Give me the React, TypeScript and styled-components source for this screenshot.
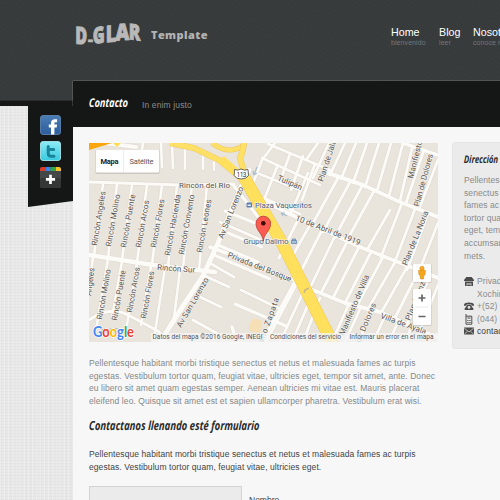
import React from "react";
import styled, { createGlobalStyle } from "styled-components";

const GlobalStyle = createGlobalStyle`
  * { box-sizing: border-box; }
  html, body { margin: 0; padding: 0; height: 500px; overflow: hidden; }
  body { font-family: "Liberation Sans", Arial, sans-serif; }
  p, h1, h2, h3 { margin: 0; font-weight: normal; }
`;

const Page = styled.div`
  width: 500px;
  height: 500px;
  overflow: hidden;
  display: flex;
  flex-direction: column;
  background-color: #e9e9e9;
  background-image:
    repeating-linear-gradient(0deg, rgba(0, 0, 0, 0.02) 0 1px, transparent 1px 3px),
    repeating-linear-gradient(90deg, rgba(255, 255, 255, 0.25) 0 1px, transparent 1px 4px),
    repeating-linear-gradient(90deg, rgba(0, 0, 0, 0.012) 0 2px, transparent 2px 5px);
`;

const darkTexture = `
  background-color: #383b3b;
  background-image:
    repeating-linear-gradient(35deg, rgba(255, 255, 255, 0.01) 0 1px, transparent 1px 4px),
    repeating-linear-gradient(-55deg, rgba(0, 0, 0, 0.025) 0 1px, transparent 1px 3px);
`;

const Header = styled.header`
  ${darkTexture}
  height: 81px;
  flex: none;
  display: flex;
  align-items: flex-start;
  padding-left: 75px;
`;

const Brand = styled.div`
  display: flex;
  flex: none;
  width: 316px;
  padding-top: 20px;
`;

const BrandTag = styled.span`
  margin: 7px 0 0 6px;
  font: 800 11px/15px "Open Sans", sans-serif;
  letter-spacing: 0.4px;
  color: #b2b3b3;
`;

const Nav = styled.nav`
  display: flex;
  flex: none;
  width: 109px;
  padding-top: 26px;
`;

const NavItem = styled.div<{ $width: number }>`
  flex: none;
  width: ${(p) => p.$width}px;
  white-space: nowrap;
`;

const NavLabel = styled.div`
  font-size: 10.7px;
  line-height: 13px;
  color: #fff;
`;

const NavHint = styled.div`
  font-size: 7px;
  line-height: 8px;
  letter-spacing: 0.08px;
  color: #747777;
`;

const Body = styled.div`
  flex: 1;
  display: flex;
  min-height: 0;
`;

const Rail = styled.div`
  width: 73px;
  flex: none;
  display: flex;
  flex-direction: column;
`;

const RailTop = styled.div`
  ${darkTexture}
  height: 20px;
  border-bottom: 1px solid #2a2c2c;
`;

const RailEdge = styled.div`
  height: 5px;
  background: #151716;
`;

const Ribbon = styled.div`
  align-self: flex-end;
  width: 45px;
  height: 101px;
  background: #151716;
  clip-path: polygon(0 0, 100% 0, 100% 94%, 0 100%);
  display: flex;
  flex-direction: column;
  align-items: center;
  gap: 6px;
  padding-top: 9px;

  svg { display: block; flex: none; }
`;

const Main = styled.main`
  flex: 1;
  min-width: 0;
  background: #f7f7f7;
  box-shadow: 0 0 1px #d2d2d2;
`;

const TitleBar = styled.div`
  height: 46px;
  background: #151716;
  display: flex;
  align-items: center;
  padding-left: 16px;
`;

const Script = styled.span<{ $size: number; $squeeze: number; $color: string }>`
  display: block;
  width: max-content;
  font: italic 700 ${(p) => p.$size}px/14px "Open Sans", sans-serif;
  transform: scaleX(${(p) => p.$squeeze}) skewX(-3deg);
  transform-origin: left center;
  color: ${(p) => p.$color};
  white-space: nowrap;
`;

const TitleSlot = styled.h1`
  width: 53px;
  margin-top: -3px;
`;

const Subtitle = styled.span`
  font-size: 8.5px;
  letter-spacing: 0.13px;
  color: #8b8b8b;
  padding-top: 2px;
`;

const Content = styled.div`
  display: flex;
  gap: 14px;
  padding: 16px 0 0 16px;
`;

const Article = styled.div`
  width: 349px;
  flex: none;
`;

const MapBox = styled.div`
  width: 349px;
  height: 199px;

  svg { display: block; }
`;

const Copy = styled.p<{ $color: string }>`
  font-size: 8.5px;
  line-height: 12.6px;
  letter-spacing: 0.08px;
  color: ${(p) => p.$color};
  white-space: nowrap;
`;

const Intro = styled.div`
  padding-top: 15px;
`;

const FormTitle = styled.h2`
  height: 14px;
  margin: 12px 0 15px;
`;

const FieldRow = styled.div`
  display: flex;
  margin-top: 12px;
  gap: 7px;
`;

const Field = styled.div`
  width: 153px;
  height: 24px;
  background: #ebebeb;
  border: 1px solid #d3d3d3;
`;

const FieldLabel = styled.span`
  font-size: 8.5px;
  line-height: 12px;
  padding-top: 8px;
  color: #444;
`;

const Aside = styled.aside`
  width: 120px;
  flex: none;
  height: 207px;
  margin-top: -1px;
  padding: 9px 0 0 11px;
  background: #ebebeb;
  border: 1px solid #e5e5e5;
  border-radius: 3px;
`;

const AsideTitle = styled.h3`
  height: 13px;
  margin-bottom: 9px;
`;

const ContactList = styled.div`
  margin-top: 13px;
`;

const ContactRow = styled.div<{ $dark?: boolean }>`
  display: flex;
  height: 12.5px;
  font-size: 8.5px;
  line-height: 12.5px;
  letter-spacing: 0.08px;
  white-space: nowrap;
  color: ${(p) => (p.$dark ? "#3c3c3c" : "#8a8a8a")};
`;

const IconSlot = styled.span`
  width: 13px;
  flex: none;

  svg { display: block; margin-top: 1px; }
`;

const Logo = () => (
  <svg width="70" height="28" viewBox="75 20 70 28" fill="#b9b9b9" stroke="#b9b9b9" strokeWidth="0.9" fontFamily="Open Sans" fontWeight="800">
    <text fontSize="22" transform="translate(75.300 43.700) skewY(3) scale(.74 1.080)">D</text>
    <text fontSize="18" transform="translate(88 44.500) scale(.85 .8)">-</text>
    <text fontSize="22" transform="translate(92.800 43.800) skewY(-6) scale(.74 1.030)">G</text>
    <text fontSize="22" transform="translate(105.700 42.600) skewY(-6) scale(.82 1.050)">L</text>
    <text fontSize="22" transform="translate(115.600 40.600) skewY(-3) scale(.86 1.030)">A</text>
    <text fontSize="22" transform="translate(128.800 39.200) skewY(7) scale(.78 1)">R</text>
  </svg>
);

const FacebookIcon = () => (
  <svg width="21" height="20" viewBox="0 0 21 20">
    <defs>
      <linearGradient id="fb" x2="0" y2="1"><stop stopColor="#4b7db5" /><stop offset="1" stopColor="#2d5c9b" /></linearGradient>
    </defs>
    <rect x=".5" y=".5" width="20" height="19" rx="2.5" fill="url(#fb)" stroke="#6b97c6" strokeWidth=".7" />
    <path d="M11 19.500v-7H8.800V9.600H11V8c0-2.600 1.500-3.800 3.800-3.800h2.300v3h-1.500c-1 0-1.200.5-1.200 1.200v1.200h2.700l-.4 2.900h-2.300v7z" fill="#fff" />
  </svg>
);

const TwitterIcon = () => (
  <svg width="21" height="20" viewBox="0 0 21 20">
    <defs>
      <linearGradient id="tw" x2="0" y2="1"><stop stopColor="#8cebf5" /><stop offset="1" stopColor="#38cbe0" /></linearGradient>
    </defs>
    <rect x=".5" y=".5" width="20" height="19" rx="2.500" fill="url(#tw)" stroke="#b3f2f8" strokeWidth=".8" />
    <path d="M8.200 5.500v6.700c0 2 1.200 3 3.200 3h2.600M8.200 8.600h5.500" fill="none" stroke="#1a8299" strokeWidth="3" strokeLinecap="round" />
  </svg>
);

const PlusIcon = () => (
  <svg width="21" height="21" viewBox="0 0 21 21">
    <rect x="0" y="1" width="21" height="20" rx="2.500" fill="#444747" />
    <rect x="0" y="11" width="21" height="10" rx="2.500" fill="#353737" />
    <path d="M0 4V2Q0 0 2 0H5.500V4Z" fill="#dc3d2a" />
    <path d="M5.500 0H10.500V4H5.500Z" fill="#3f83ef" />
    <path d="M10.500 0H16V4H10.500Z" fill="#2fa84a" />
    <path d="M16 0H19Q21 0 21 2V4H16Z" fill="#f6c22d" />
    <path d="M10.500 7.800V17M5.900 12.400H15.100" stroke="#fff" strokeWidth="2.700" />
  </svg>
);

const HomeIcon = () => (
  <svg width="10" height="10" viewBox="0 0 10 10" fill="#4c4c4c">
    <path d="M2.300 1h5.400L10 4v1H0V4z" />
    <path d="M1 5.500h8V10H7.300V7H2.700v3H1zM3.200 7.600h3.600v.8H3.200zM3.200 9h3.600v1H3.200z" />
  </svg>
);

const PhoneIcon = () => (
  <svg width="10" height="10" viewBox="0 0 10 10" fill="#4c4c4c">
    <path d="M0 3.800C0 .8 10 .8 10 3.800v1H7.400V3.400H2.600v1.400H0z" />
    <path d="M3.300 4h3.400l2.600 3.500V9H.7V7.500z" />
    <circle cx="5" cy="6.400" r="1.300" fill="#ebebeb" />
  </svg>
);

const MobileIcon = () => (
  <svg width="10" height="11" viewBox="0 0 10 11" fill="none" stroke="#4c4c4c">
    <path d="M2 0v10.200h5.800V2.200H2M3.500 4h3" />
    <path d="M3.300 6.500h3.400M3.300 8.500h3.400" strokeDasharray="1 .4" />
  </svg>
);

const MailIcon = () => (
  <svg width="10" height="10" viewBox="0 0 10 10">
    <rect y="1.500" width="10" height="7" fill="#4c4c4c" />
    <path d="M.3 2.200L5 6l4.700-3.800M.5 8l3-2.700M9.500 8l-3-2.700" fill="none" stroke="#ebebeb" strokeWidth=".7" />
  </svg>
);

const WHITE_ROADS: [string, number][] = [
  // left side: Rincón streets
  ["M89 182L180 185L234 184", 3],
  ["M89 255L153 265L215 272", 4.5],
  ["M103 184L94 256M117 184L108 258M132 185L122 260M147 185L137 262M162 185L152 264M177 186L168 266M192 185L183 268M207 185L199 270", 2.600],
  ["M93 257L89 290M108 259L96 330M122 261L112 318M137 263L127 325M151 266L141 325M165 268L155 332M180 270L174 318", 2.600],
  ["M89 320Q110 305 130 316L158 331L166 342", 3],
  ["M161 143L162 167M172 143L173 168M185 147L185 169M203 155L203 169M214 160L214 170M143 143L142 150", 2.600],
  ["M104 143L136 147", 4],
  // Av San Lorenzo
  ["M249 170L238 194L218 243L203 276L183 306L160 342", 5],
  ["M234 186L262 222L275 240", 3.500],
  // below the avenue
  ["M225 211L255 223M220 222L268 243M228 233L262 247M218 245L258 262M214 255L270 279M208 262L234 277M203 275L229 287M198 296L221 307M241 290L280 309M235 304L286 326M193 320L220 335", 3],
  ["M210 247L240 258L297 281M296 280L262 342M232 327L237 342", 3.500],
  // north of the highway
  ["M275 143L262 160L252 186M262 158L320 185M257 173L300 190M268 144L330 170M277 167L264 200M290 154L280 181M303 156L291 190M315 164L302 200M264 198L300 214", 2.800],
  ["M318 143L306 160M329 143L313 178M308 173L290 215", 2.800],
  ["M328 173L363 185L400 202L438 217", 4],
  ["M403 143L438 155", 3.500],
  ["M345 143L330 175M356 143L341 179M367 143L353 183M379 143L365 187M391 143L377 191M403 143L389 196M412 148L400 201M438 160L419 209M424 150L406 203", 2.800],
  ["M338 178L312 225M350 182L323 232M362 186L335 237M374 191L346 242M390 210L367 250M402 203L381 257M415 209L394 264M428 214L407 270M438 223L418 274", 2.800],
  // 10 de Abril de 1919
  ["M264 201L298 218L360 247L398 262L438 278", 4],
  // Villa de Ayala
  ["M313 290L345 303L380 312L438 338", 4],
  ["M298 220L279 258M310 225L288 264M322 230L297 279M335 236L309 290M347 242L321 293M359 247L333 298M371 252L345 303M383 257L357 306M395 262L368 309M407 267L381 313M418 272L395 318M430 277L407 324M438 285L420 331", 2.800],
  ["M306 286L280 342M297 283L266 342M313 293L292 342M320 298L303 342M348 306L332 342M360 309L345 342M372 312L358 342M385 316L373 342M398 322L389 342M411 328L405 342", 2.800],
];

const YELLOW_ROADS: [string, number][] = [
  ["M170 143L194 148L219 160L241 178", 5],
  ["M212 143Q229 156 244 145", 4],
  ["M244 143Q243 152 240 158L244 172", 5],
];

interface StreetLabel { text: string; x: number; y: number; rotate: number; length: number; }

const STREETS: StreetLabel[] = [
  { text: "Rincón del Rio", x: 179, y: 187.500, rotate: 0, length: 51 },
  { text: "Rincón Sur", x: 157, y: 270, rotate: 4, length: 38 },
  { text: "Rincón Angeles", x: 97, y: 246, rotate: -81, length: 55 },
  { text: "Rincón Molino", x: 111, y: 247, rotate: -80, length: 53 },
  { text: "Rincón Puente", x: 126, y: 248, rotate: -80, length: 54 },
  { text: "Rincón Arcos", x: 141, y: 248, rotate: -80, length: 48 },
  { text: "Rincón Flores", x: 156, y: 248, rotate: -80, length: 49 },
  { text: "Rincón Hacienda", x: 170, y: 256, rotate: -80, length: 62 },
  { text: "Rincón Convento", x: 184, y: 255, rotate: -80, length: 61 },
  { text: "Rincón Leones", x: 202, y: 253, rotate: -80, length: 54 },
  { text: "Angeles", x: 91, y: 296, rotate: -83, length: 28 },
  { text: "Rincón Molino", x: 102, y: 320, rotate: -80, length: 51 },
  { text: "Rincón Puente", x: 117, y: 321, rotate: -80, length: 51 },
  { text: "Rincón Arcos", x: 132, y: 313, rotate: -80, length: 46 },
  { text: "Rincón Flores", x: 146, y: 319, rotate: -80, length: 48 },
  { text: "Av San Lorenzo", x: 223, y: 239, rotate: -68, length: 55 },
  { text: "Av San Lorenzo", x: 181, y: 328, rotate: -60, length: 56 },
  { text: "Tulipán", x: 277, y: 180, rotate: 23, length: 26 },
  { text: "10 de Abril de 1919", x: 295, y: 220, rotate: 21.500, length: 69 },
  { text: "Privada del Bosque", x: 227, y: 257, rotate: 21.500, length: 68 },
  { text: "Plan de Jalapa", x: 323, y: 182, rotate: -72, length: 52 },
  { text: "Manifiesto de", x: 413, y: 179, rotate: -76, length: 50 },
  { text: "Plan de Dolores", x: 419, y: 207, rotate: -75, length: 54 },
  { text: "Plan de La Noria", x: 407, y: 266, rotate: -68, length: 58 },
  { text: "Manifiesto de Villa", x: 344, y: 336, rotate: -67, length: 65 },
  { text: "de Dolores", x: 360, y: 343, rotate: -67, length: 42 },
  { text: "Villa de Ayala", x: 380, y: 318, rotate: 20, length: 48 },
  { text: "Plan Monza", x: 410, y: 321, rotate: -68, length: 46 },
  { text: "iano Zapata", x: 262, y: 346, rotate: -70, length: 50 },
];

const MapDrawing = () => (
  <svg width="349" height="199" viewBox="89 143 349 199" fontFamily="Roboto, sans-serif">
    <rect x="89" y="143" width="349" height="199" fill="#e9e4dc" />
    <path d="M249 324l5-6 8 3-2 12-11-2z" fill="#f6dfb5" />
    {WHITE_ROADS.map(([d, w]) => (
      <path key={d} d={d} fill="none" stroke="#ddd6cc" strokeWidth={w + 0.800} strokeLinecap="round" />
    ))}
    {WHITE_ROADS.map(([d, w]) => (
      <path key={d} d={d} fill="none" stroke="#fcfbf8" strokeWidth={w} strokeLinecap="round" strokeLinejoin="round" />
    ))}
    <path d="M89 143h23l-23 7z" fill="#fba60a" />
    <path d="M113 143h8l-4 4z" fill="#ffdc50" />
    {YELLOW_ROADS.map(([d, w]) => (
      <g key={d} fill="none">
        <path d={d} stroke="#efc95a" strokeWidth={w + 1} />
        <path d={d} stroke="#ffe066" strokeWidth={w} />
      </g>
    ))}
    <path d="M221 159L243 178" fill="none" stroke="#ffe05d" strokeWidth="8" />
    <path d="M241 172L282 243L334 346" fill="none" stroke="#efc95a" strokeWidth="12.500" />
    <path d="M241 172L282 243L334 346" fill="none" stroke="#ffe05d" strokeWidth="11.500" />
    <path d="M304 293l1-3 4-2" fill="none" stroke="#c6b887" strokeWidth="1.500" />
    <path d="M257 167l-3 8m0 0l-1-4m1 4l3-2M287 216l-6-3m0 0l2 3m-2-3h4" fill="none" stroke="#a9bfd0" strokeWidth="1.200" />

    <g fontSize="8" fill="#5a5754" stroke="#f5f2ed" strokeWidth="1.200" paintOrder="stroke">
      {STREETS.map((s) => (
        <text key={s.text + s.x} transform={`translate(${s.x} ${s.y}) rotate(${s.rotate})`} textLength={s.length}>
          {s.text}
        </text>
      ))}
    </g>

    <path d="M234.500 169.500q3.500 1.500 6.500-.5q3.500 2 7 .5l.5 6q-2 3.500-7.300 3.500t-7-3.500z" fill="#fff" stroke="#555" strokeWidth=".9" />
    <text x="236.500" y="176.500" fontSize="6.500" fill="#333" textLength="10">113</text>

    <rect x="246.500" y="202.500" width="5.500" height="5" rx="1" fill="#5a7fae" />
    <path d="M247.500 204.500h3.500v1.500h-3.500z" fill="#e2e9f0" />
    <g fontSize="8" fill="#4c6680" stroke="#f5f2ed" strokeWidth="1.200" paintOrder="stroke">
      <text x="255" y="208" textLength="57">Plaza Vaqueritos</text>
      <text x="243.500" y="244" textLength="45">Grupo Dalimo</text>
    </g>
    <path d="M291.500 240.500h5v3h-5zM292.500 240.500v-1.500h3v1.500" fill="#a9bfd6" stroke="#5a7fae" strokeWidth=".7" />

    <path d="M263.300 241c-.3-7-7.300-10.200-7.300-17.500a7.300 7.300 0 0 1 14.600 0c0 7.300-7 10.500-7.300 17.500z" fill="#fb5b50" stroke="#b9362f" strokeWidth=".8" />
    <circle cx="263.300" cy="223.300" r="2.300" fill="#3b0c0a" />

    <rect x="95.500" y="150" width="64" height="24" rx="1" fill="#000" opacity=".12" />
    <rect x="96" y="150" width="63" height="22.500" rx="1" fill="#fff" />
    <path d="M123.500 150v22.500" stroke="#e9e9e9" strokeWidth=".8" />
    <text x="100.500" y="163.700" fontSize="7.500" fontWeight="700" fill="#222" textLength="18">Mapa</text>
    <text x="129.500" y="163.700" fontSize="7.500" fill="#565656" textLength="24">Satélite</text>

    <text x="101" y="333" fontSize="8" fill="#777" opacity=".5">del Sur</text>
    <g fontFamily="Lato, sans-serif" fontWeight="700" fontSize="15.500" stroke="#fff" strokeWidth="1.400" paintOrder="stroke">
      <text x="93" y="337" textLength="41" lengthAdjust="spacingAndGlyphs">
        <tspan fill="#4285f4">G</tspan><tspan fill="#ea4335">o</tspan><tspan fill="#fbbc05">o</tspan><tspan fill="#4285f4">g</tspan><tspan fill="#34a853">l</tspan><tspan fill="#ea4335">e</tspan>
      </text>
    </g>

    <rect x="151" y="333" width="287" height="9" fill="#f5f5f5" opacity=".78" />
    <g fontSize="6.500" fill="#555">
      <text x="152.500" y="339.200" textLength="110">Datos del mapa ©2016 Google, INEGI</text>
      <text x="270" y="339.200" textLength="71">Condiciones del servicio</text>
      <text x="349.500" y="339.200" textLength="84">Informar un error en el mapa</text>
    </g>

    <g fill="#000" opacity=".14">
      <rect x="412.500" y="264" width="19" height="18.800" rx="1" />
      <rect x="412.500" y="289" width="19" height="36.800" rx="1" />
    </g>
    <rect x="413" y="264" width="18" height="18" rx="1" fill="#fff" />
    <rect x="413" y="289" width="18" height="36" rx="1" fill="#fff" />
    <path d="M416 307h12" stroke="#e6e6e6" strokeWidth=".8" />
    <path d="M422 294.500v7M418.500 298h7M418.500 316.500h7" stroke="#666" strokeWidth="1.700" />
    <g fill="#f5a81c" stroke="#d58112" strokeWidth=".5">
      <path d="M418.500 270.500q3.500-1.500 7 0l-.5 4.500h-1l-.5 4h-3l-.5-4h-1z" />
      <circle cx="422" cy="268.300" r="2.100" />
    </g>
  </svg>
);

export default function App() {
  return (
    <Page>
      <GlobalStyle />
      <Header>
        <Brand>
          <Logo />
          <BrandTag>Template</BrandTag>
        </Brand>
        <Nav>
          <NavItem $width={48}><NavLabel>Home</NavLabel><NavHint>bienvenido</NavHint></NavItem>
          <NavItem $width={34}><NavLabel>Blog</NavLabel><NavHint>leer</NavHint></NavItem>
          <NavItem $width={60}><NavLabel>Nosotros</NavLabel><NavHint>conoce mas</NavHint></NavItem>
        </Nav>
      </Header>
      <Body>
        <Rail>
          <RailTop />
          <RailEdge />
          <Ribbon>
            <FacebookIcon />
            <TwitterIcon />
            <PlusIcon />
          </Ribbon>
        </Rail>
        <Main>
          <TitleBar>
            <TitleSlot><Script $size={12} $squeeze={0.760} $color="#fff">Contacto</Script></TitleSlot>
            <Subtitle>In enim justo</Subtitle>
          </TitleBar>
          <Content>
            <Article>
              <MapBox><MapDrawing /></MapBox>
              <Intro>
                <Copy $color="#858989">
                  Pellentesque habitant morbi tristique senectus et netus et malesuada fames ac turpis<br />
                  egestas. Vestibulum tortor quam, feugiat vitae, ultricies eget, tempor sit amet, ante. Donec<br />
                  eu libero sit amet quam egestas semper. Aenean ultricies mi vitae est. Mauris placerat<br />
                  eleifend leo. Quisque sit amet est et sapien ullamcorper pharetra. Vestibulum erat wisi.
                </Copy>
              </Intro>
              <FormTitle><Script $size={12.500} $squeeze={0.760} $color="#2b2b2b">Contactanos llenando esté formulario</Script></FormTitle>
              <Copy $color="#444">
                Pellentesque habitant morbi tristique senectus et netus et malesuada fames ac turpis<br />
                egestas. Vestibulum tortor quam, feugiat vitae, ultricies eget.
              </Copy>
              <FieldRow>
                <Field />
                <FieldLabel>Nombre</FieldLabel>
              </FieldRow>
            </Article>
            <Aside>
              <AsideTitle><Script $size={10.500} $squeeze={0.740} $color="#2b2b2b">Dirección</Script></AsideTitle>
              <Copy $color="#8a8a8a">
                Pellentesque<br />senectus et<br />fames ac turpis<br />tortor quam,<br />eget, tempor<br />accumsan<br />mets.
              </Copy>
              <ContactList>
                <ContactRow><IconSlot><HomeIcon /></IconSlot>Privada del</ContactRow>
                <ContactRow><IconSlot />Xochimilco</ContactRow>
                <ContactRow><IconSlot><PhoneIcon /></IconSlot>+(52) 55</ContactRow>
                <ContactRow><IconSlot><MobileIcon /></IconSlot>(044) 55</ContactRow>
                <ContactRow $dark><IconSlot><MailIcon /></IconSlot>contacto@</ContactRow>
              </ContactList>
            </Aside>
          </Content>
        </Main>
      </Body>
    </Page>
  );
}
